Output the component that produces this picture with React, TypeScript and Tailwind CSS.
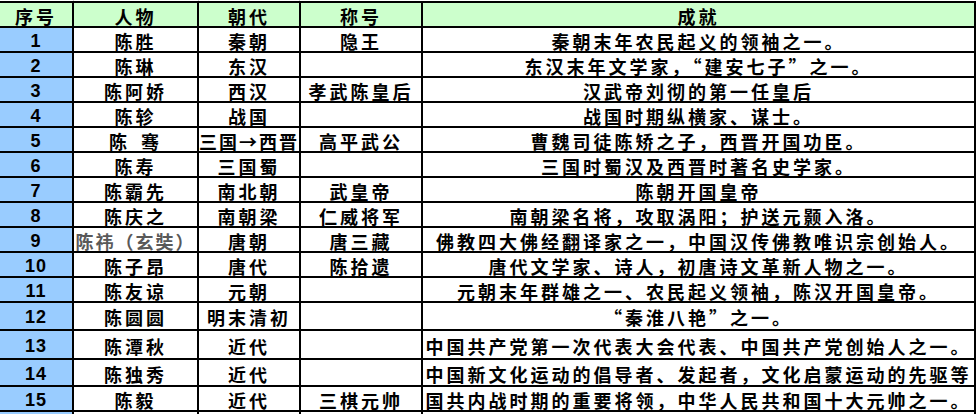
type Row = {
  no: number
  name: React.ReactNode
  era: string
  title: string
  deeds: string
  h: string
  nameClass?: string
  eraClass?: string
}

const COLS = 'grid-cols-[72px_123px_100px_120px_551px]'

const ROWS: Row[] = [
  { no: 1, name: '陈胜', era: '秦朝', title: '隐王', deeds: '秦朝末年农民起义的领袖之一。', h: 'h-[23px]' },
  { no: 2, name: '陈琳', era: '东汉', title: '', deeds: '东汉末年文学家，“建安七子”之一。', h: 'h-[23px]' },
  { no: 3, name: '陈阿娇', era: '西汉', title: '孝武陈皇后', deeds: '汉武帝刘彻的第一任皇后', h: 'h-[23px]' },
  { no: 4, name: '陈轸', era: '战国', title: '', deeds: '战国时期纵横家、谋士。', h: 'h-[23px]' },
  {
    no: 5,
    name: (
      <>
        陈<span className="inline-block w-[11px]" />骞
      </>
    ),
    era: '三国→西晋',
    eraClass: 'tracking-[2px]',
    title: '高平武公',
    deeds: '曹魏司徒陈矫之子，西晋开国功臣。',
    h: 'h-[23px]'
  },
  { no: 6, name: '陈寿', era: '三国蜀', title: '', deeds: '三国时蜀汉及西晋时著名史学家。', h: 'h-[23px]' },
  { no: 7, name: '陈霸先', era: '南北朝', title: '武皇帝', deeds: '陈朝开国皇帝', h: 'h-[23px]' },
  { no: 8, name: '陈庆之', era: '南朝梁', title: '仁威将军', deeds: '南朝梁名将，攻取涡阳；护送元颢入洛。', h: 'h-[23px]' },
  {
    no: 9,
    name: '陈祎（玄奘）',
    nameClass: 'tracking-[2px] text-[#595959]',
    era: '唐朝',
    title: '唐三藏',
    deeds: '佛教四大佛经翻译家之一，中国汉传佛教唯识宗创始人。',
    h: 'h-[23px]'
  },
  { no: 10, name: '陈子昂', era: '唐代', title: '陈拾遗', deeds: '唐代文学家、诗人，初唐诗文革新人物之一。', h: 'h-[23px]' },
  { no: 11, name: '陈友谅', era: '元朝', title: '', deeds: '元朝末年群雄之一、农民起义领袖，陈汉开国皇帝。', h: 'h-[23px]' },
  { no: 12, name: '陈圆圆', era: '明末清初', title: '', deeds: '“秦淮八艳”之一。', h: 'h-[26px]' },
  { no: 13, name: '陈潭秋', era: '近代', title: '', deeds: '中国共产党第一次代表大会代表、中国共产党创始人之一。', h: 'h-[27px]' },
  { no: 14, name: '陈独秀', era: '近代', title: '', deeds: '中国新文化运动的倡导者、发起者，文化启蒙运动的先驱等', h: 'h-[25px]' },
  { no: 15, name: '陈毅', era: '近代', title: '三棋元帅', deeds: '国共内战时期的重要将领，中华人民共和国十大元帅之一。', h: 'h-[23px]' }
]

// tracking is left out here so each cell can set its own
const cell =
  "flex items-center justify-center whitespace-nowrap pt-[2px] text-[18px] leading-none font-bold font-['Noto_Sans_CJK_SC',sans-serif]"

export default function App() {
  return (
    <div lang="zh-CN" className="h-[414px] w-[977px] overflow-hidden bg-white">
      {/* gridlines of the empty sheet row above */}
      <div className="flex h-[1px]">
        <div className="w-[74px] border-r border-[#d4d4d4]" />
        <div className="w-[125px] border-r border-[#d4d4d4]" />
        <div className="w-[101px] border-r border-[#d4d4d4]" />
      </div>

      <div className={`grid w-[976px] ${COLS} gap-[2px] bg-black pt-[2px] pr-[2px]`}>
        {['序号', '人物', '朝代', '称号', '成就'].map((label) => (
          <div key={label} className={`${cell} h-[23px] bg-[#ccffcc] tracking-[3px] text-black`}>
            {label}
          </div>
        ))}

        {ROWS.map((row) => (
          <div key={row.no} className="contents">
            <div
              className={`${row.h} flex items-center justify-center pt-[2px] text-[18px] leading-none font-bold tracking-[1px] text-black bg-[#99ccff] font-['Liberation_Sans',sans-serif]`}
            >
              {row.no}
            </div>
            <div className={`${cell} ${row.h} bg-white ${row.nameClass ?? 'tracking-[3px] text-black'}`}>
              {row.name}
            </div>
            <div className={`${cell} ${row.h} bg-white text-black ${row.eraClass ?? 'tracking-[3px]'}`}>
              {row.era}
            </div>
            <div className={`${cell} ${row.h} bg-white tracking-[3px] text-black`}>{row.title}</div>
            <div className={`${cell} ${row.h} bg-white tracking-[3px] text-black`}>{row.deeds}</div>
          </div>
        ))}

        <div className="h-[23px] bg-[#99ccff]" />
        <div className="h-[23px] bg-white" />
        <div className="h-[23px] bg-white" />
        <div className="h-[23px] bg-white" />
        <div className="h-[23px] bg-white" />
      </div>
    </div>
  )
}
